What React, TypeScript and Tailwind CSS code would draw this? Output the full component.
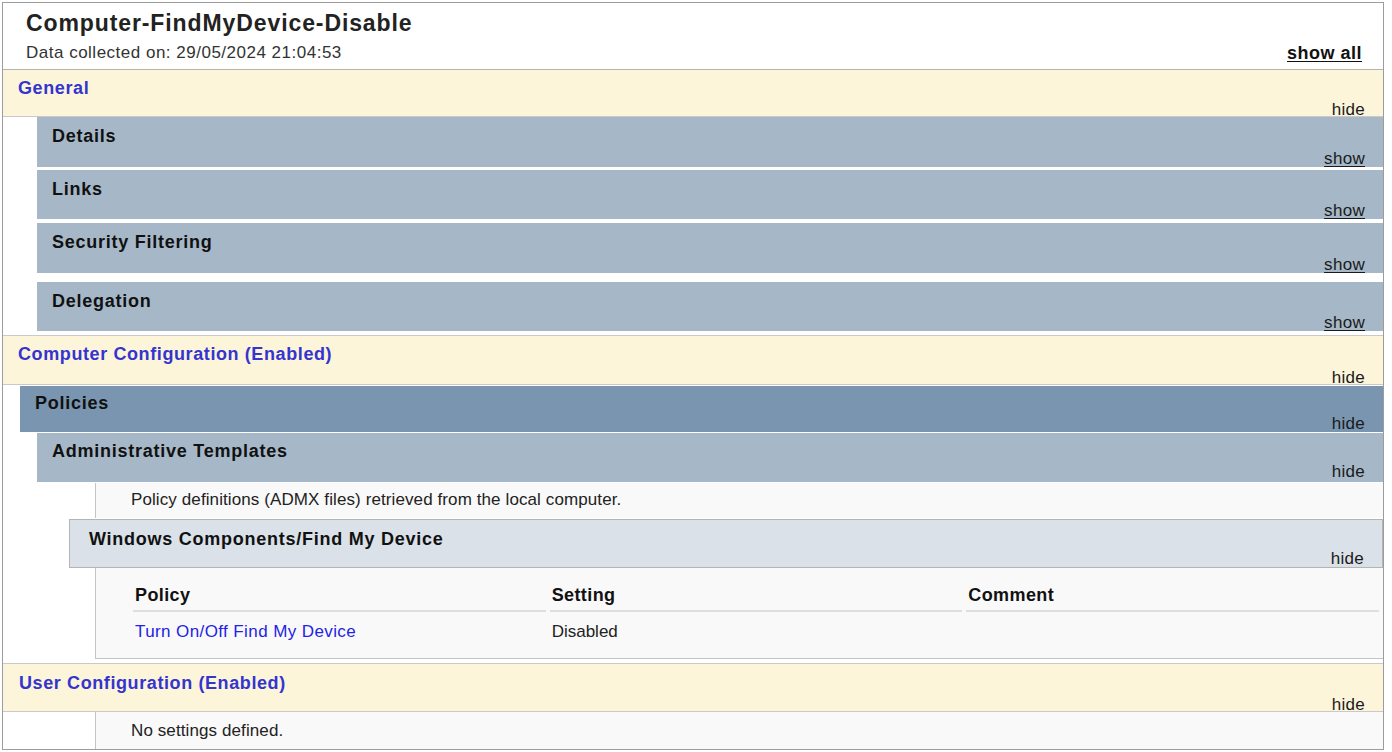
import { FC, ReactNode } from "react";

const Toggle: FC<{ label: string; underline?: boolean; className?: string }> = ({
  label,
  underline,
  className = "leading-[16px]",
}) => (
  <div className={`mt-auto text-right pr-[18px] text-[17px] tracking-[0.3px] text-[#1a1a1a] ${className}`}>
    <span className={underline ? "underline underline-offset-2" : ""}>{label}</span>
  </div>
);

// Yellow top-level band (General / Computer / User configuration)
const Band: FC<{ title: string; className?: string; titleClass?: string }> = ({
  title,
  className = "",
  titleClass = "pl-[15px] pt-[9px]",
}) => (
  <div className={`flex flex-col bg-[#fcf5da] border-[#c9c9c9] ${className}`}>
    <div className={`leading-[18px] text-[18px] font-bold tracking-[0.6px] text-[#3434cf] ${titleClass}`}>
      {title}
    </div>
    <Toggle label="hide" className="leading-[13px]" />
  </div>
);

// Blue-grey sub heading bars
const Bar: FC<{
  title: string;
  toggle: string;
  underline?: boolean;
  className?: string;
  titleClass?: string;
  toggleClass?: string;
}> = ({ title, toggle, underline, className = "", titleClass = "pl-[15px] pt-[10px]", toggleClass }) => (
  <div className={`flex flex-col ${className}`}>
    <div className={`leading-[18px] text-[18px] font-bold tracking-[0.75px] text-[#111] ${titleClass}`}>
      {title}
    </div>
    <Toggle label={toggle} underline={underline} className={toggleClass} />
  </div>
);

const Body: FC<{ children: ReactNode; className?: string }> = ({ children, className = "" }) => (
  <div className={`ml-[92px] border-l border-[#c4c4c4] bg-[#f9f9f9] ${className}`}>{children}</div>
);

export default function App() {
  return (
    <div className="w-[1392px] h-[752px] bg-white pt-[2px] pl-[2px] font-['Liberation_Sans',Arial,sans-serif] text-[#1a1a1a]">
      <div className="w-[1382px] h-[748px] border border-[#9c9c9c] flex flex-col overflow-hidden">
        {/* Header */}
        <div className="h-[67px] shrink-0 border-b border-[#b4b4b4] flex flex-col pl-[23px] pr-[21px]">
          <div className="mt-[8px] leading-[24px] text-[23px] font-bold tracking-[0.9px] text-[#222]">
            Computer-FindMyDevice-Disable
          </div>
          <div className="mt-[8px] flex items-end justify-between">
            <span className="leading-[20px] text-[17px] tracking-[0.5px] text-[#333]">
              Data collected on: 29/05/2024 21:04:53
            </span>
            <span className="leading-[20px] text-[18px] font-bold underline underline-offset-2 tracking-[0.5px] text-[#111]">
              show all
            </span>
          </div>
        </div>

        {/* General */}
        <Band title="General" className="h-[47px] shrink-0 border-b" />
        <div className="pl-[34px] pb-[4px] shrink-0 flex flex-col">
          <Bar title="Details" toggle="show" underline className="h-[50px] bg-[#a6b8c8]" />
          <Bar title="Links" toggle="show" underline className="h-[49px] mt-[3px] bg-[#a6b8c8]" />
          <Bar title="Security Filtering" toggle="show" underline className="h-[50px] mt-[4px] bg-[#a6b8c8]" />
          <Bar title="Delegation" toggle="show" underline className="h-[49px] mt-[9px] bg-[#a6b8c8]" />
        </div>

        {/* Computer Configuration */}
        <Band title="Computer Configuration (Enabled)" className="h-[50px] shrink-0 border-y" />
        <Bar
          title="Policies"
          toggle="hide"
          className="h-[46px] ml-[17px] mt-[1px] shrink-0 bg-[#7995af]"
          titleClass="pl-[15px] pt-[8px]"
        />
        <Bar
          title="Administrative Templates"
          toggle="hide"
          className="h-[49px] ml-[34px] mt-[1px] shrink-0 bg-[#a6b8c8]"
          titleClass="pl-[15px] pt-[9px]"
          toggleClass="leading-[16px] pb-[2px]"
        />
        <Body className="h-[35px] mt-[1px] shrink-0">
          <div className="pl-[35px] pt-[8px] leading-[18px] text-[17px] tracking-[0.1px] text-[#222]">
            Policy definitions (ADMX files) retrieved from the local computer.
          </div>
        </Body>
        <Bar
          title="Windows Components/Find My Device"
          toggle="hide"
          className="h-[49px] ml-[66px] mt-[1px] shrink-0 border border-[#b4b4b4] bg-[#dae1e8]"
          titleClass="pl-[19px] pt-[10px]"
        />
        <Body className="h-[91px] shrink-0 border-b pl-[37px] pr-[4px] pt-[17px]">
          <div className="grid grid-cols-3 gap-x-[4px]">
            {["Policy", "Setting", "Comment"].map((h) => (
              <div
                key={h}
                className="pl-[2px] pb-[5px] leading-[20px] text-[18px] font-bold tracking-[0.4px] text-[#111] border-b-2 border-[#dedede]"
              >
                {h}
              </div>
            ))}
            <div className="pl-[2px] pt-[10px] leading-[20px] text-[17px] tracking-[0.4px] text-[#2323e6]">
              Turn On/Off Find My Device
            </div>
            <div className="pl-[2px] pt-[10px] leading-[20px] text-[17px] text-[#222]">Disabled</div>
            <div />
          </div>
        </Body>

        {/* User Configuration */}
        <Band
          title="User Configuration (Enabled)"
          className="h-[49px] mt-[4px] shrink-0 border-y"
          titleClass="pl-[16px] pt-[10px]"
        />
        <Body className="flex-1">
          <div className="pl-[35px] pt-[10px] leading-[18px] text-[17px] tracking-[0.1px] text-[#222]">
            No settings defined.
          </div>
        </Body>
      </div>
    </div>
  );
}
